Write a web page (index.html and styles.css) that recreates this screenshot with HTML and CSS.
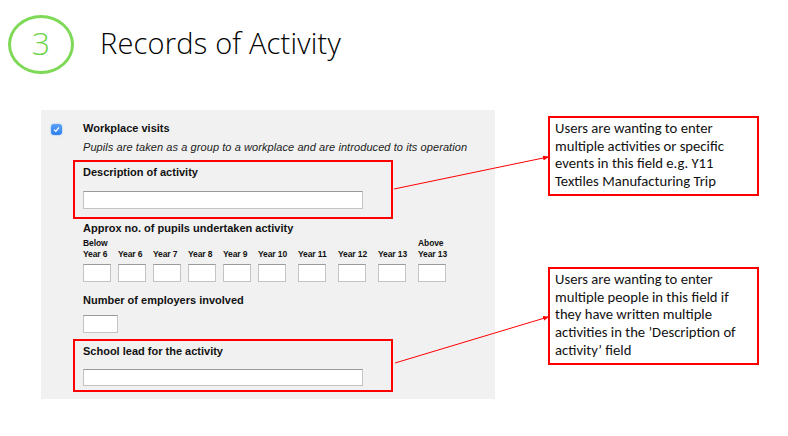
FILE: index.html
```html
<!DOCTYPE html>
<html>
<head>
<meta charset="utf-8">
<link rel="stylesheet" href="styles.css">
</head>
<body>
<div class="slide">
  <header class="head">
    <div class="num">3</div>
    <h1 class="title">Records of Activity</h1>
  </header>
  <main class="main">
    <section class="panel">
      <div class="check"><svg width="7" height="7" viewBox="0 0 7 7"><path d="M1 3.6 L2.8 5.3 L6 1.5" fill="none" stroke="#fff" stroke-width="1.2"/></svg></div>
      <div class="fields">
        <div class="lbl">Workplace visits</div>
        <div class="desc">Pupils are taken as a group to a workplace and are introduced to its operation</div>
        <div class="hl hl-desc">
          <div class="lbl">Description of activity</div>
          <div class="input wide"></div>
        </div>
        <div class="lbl approx">Approx no. of pupils undertaken activity</div>
        <div class="years">
          <div class="yr"><div class="ylbl">Below<br>Year 6</div><div class="input small"></div></div>
          <div class="yr"><div class="ylbl">Year 6</div><div class="input small"></div></div>
          <div class="yr"><div class="ylbl">Year 7</div><div class="input small"></div></div>
          <div class="yr"><div class="ylbl">Year 8</div><div class="input small"></div></div>
          <div class="yr"><div class="ylbl">Year 9</div><div class="input small"></div></div>
          <div class="yr big"><div class="ylbl">Year 10</div><div class="input small"></div></div>
          <div class="yr big"><div class="ylbl">Year 11</div><div class="input small"></div></div>
          <div class="yr big"><div class="ylbl">Year 12</div><div class="input small"></div></div>
          <div class="yr big"><div class="ylbl">Year 13</div><div class="input small"></div></div>
          <div class="yr"><div class="ylbl">Above<br>Year 13</div><div class="input small"></div></div>
        </div>
        <div class="lbl employers">Number of employers involved</div>
        <div class="input emp"></div>
        <div class="hl hl-lead">
          <div class="lbl">School lead for the activity</div>
          <div class="input wide lead"></div>
        </div>
      </div>
    </section>
    <aside class="notes">
      <div class="note note1">Users are wanting to enter multiple activities or specific events in this field e.g. Y11 Textiles Manufacturing Trip</div>
      <div class="note note2">Users are wanting to enter multiple people in this field if they have written multiple activities in the ’Description of activity’ field</div>
    </aside>
  </main>
  <svg class="arrows" width="788" height="436" viewBox="0 0 788 436">
    <defs>
      <marker id="ah" markerWidth="6" markerHeight="6" refX="5" refY="3" orient="auto" markerUnits="userSpaceOnUse">
        <path d="M0 0.5 L6 3 L0 5.5 Z" fill="#ff0000"/>
      </marker>
    </defs>
    <line x1="394" y1="189" x2="548" y2="157" stroke="#ff0000" stroke-width="1" marker-end="url(#ah)"/>
    <line x1="395" y1="363" x2="548" y2="317" stroke="#ff0000" stroke-width="1" marker-end="url(#ah)"/>
  </svg>
</div>
</body>
</html>
```
FILE: styles.css
```css
* { box-sizing: border-box; }
html, body { margin: 0; padding: 0; background: #fff; }
.slide { position: relative; width: 788px; height: 436px; overflow: hidden; }

.head { display: flex; align-items: center; padding: 14px 0 0 8px; height: 74px; }
.num {
  width: 66px; height: 59px; border: 3px solid #7ed957; border-radius: 50%;
  display: flex; align-items: center; justify-content: center;
  font-family: "Open Sans", sans-serif; font-weight: 300; font-size: 32px; color: #6fd34a;
  line-height: 1; padding-bottom: 2px;
}
.title {
  margin: 0 0 0 26px; font-family: "Open Sans", sans-serif; font-weight: 300;
  font-size: 29px; color: #000; letter-spacing: 0.2px; padding-bottom: 4px;
}

.main { display: flex; margin-top: 36px; }
.panel {
  margin-left: 41px; width: 454px; height: 289px; background: #f1f1f1;
  display: flex; padding: 14px 0 0 10px;
  font-family: "Liberation Sans", Arial, sans-serif; color: #111;
}
.check {
  width: 11px; height: 11px; border-radius: 3px; margin-top: 0;
  background: linear-gradient(#5aa2f7, #2e7ff0); box-shadow: 0 0 2px #8ab8f5;
  display: flex; align-items: center; justify-content: center; flex: none;
}
.fields { margin-left: 21px; }
.lbl { font-size: 11px; font-weight: bold; line-height: 13px; margin-top: -2px; }
.desc { font-size: 11px; font-style: italic; line-height: 13px; margin-top: 6px; color: #222; white-space: nowrap; letter-spacing: 0.08px; }
.hl { border: 2px solid #ff0000; margin-left: -10px; width: 320px; padding: 6px 0 8px 8px; }
.hl-desc { margin-top: 6px; height: 59px; }
.hl-desc .input { margin-top: 12px; }
.input { background: #fff; border: 1px solid #c4c4c4; border-top-color: #9a9a9a; }
.wide { width: 280px; height: 18px; }
.approx { margin-top: 3px; }
.years { display: flex; gap: 7px; margin-top: 3px; }
.yr { display: flex; flex-direction: column; justify-content: flex-end; width: 28px; }
.yr.big { width: 33px; }
.ylbl { font-size: 8.5px; font-weight: bold; line-height: 11px; white-space: nowrap; margin-bottom: 4px; letter-spacing: -0.1px; }
.small { width: 28px; height: 18px; }
.employers { margin-top: 12px; }
.emp { width: 35px; height: 18px; margin-top: 8px; }
.hl-lead { margin-top: 6px; height: 53px; }
.hl-lead .input { margin-top: 11px; height: 17px; }

.notes { margin-left: 53px; display: flex; flex-direction: column; }
.note {
  width: 211px; border: 2px solid #ff0000; background: #fff;
  font-family: Carlito, "Liberation Sans", sans-serif; font-size: 14.67px; line-height: 17.7px;
  color: #111; padding: 2px 4px 3px 5px;
}
.note1 { margin-top: 6px; height: 80px; }
.note2 { margin-top: 71px; height: 98px; }

.arrows { position: absolute; left: 0; top: 0; pointer-events: none; }
```
